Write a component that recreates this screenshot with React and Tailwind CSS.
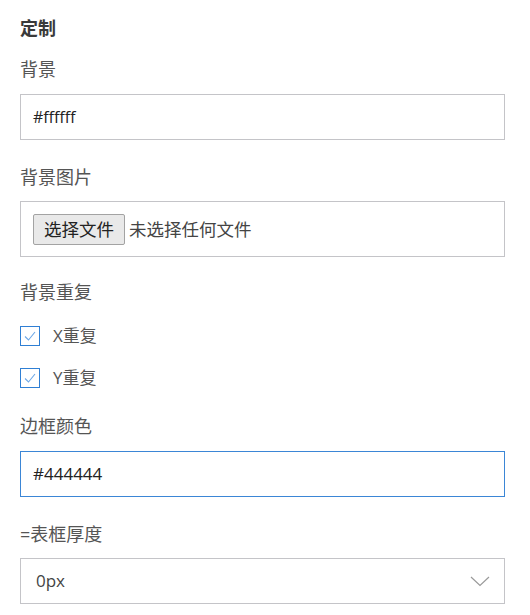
import React from 'react';

const font = { fontFamily: '"Open Sans", "Noto Sans CJK SC", sans-serif' };

function Label({ children, className = '' }) {
  return (
    <div className={`text-[18px] leading-[24px] text-[#555] ${className}`}>{children}</div>
  );
}

function CheckRow({ label, className = '' }) {
  return (
    <div className={`flex items-center h-6 ${className}`}>
      <span className="w-5 h-5 border-[1.5px] border-[#2f7fd4] flex items-center justify-center bg-white">
        <svg width="14" height="12" viewBox="0 0 14 12" fill="none">
          <path d="M2 6.5 L5.5 10 L12 2" stroke="#6fa8e6" strokeWidth="1.1" />
        </svg>
      </span>
      <span className="ml-[13px] text-[17px] text-[#555]">{label}</span>
    </div>
  );
}

export default function App() {
  return (
    <div className="bg-white w-[530px] h-[615px] pl-5 pr-[25px] pt-4" style={font}>
      <div className="text-[18px] leading-[24px] font-bold text-[#3a3a3a]">定制</div>

      <Label className="mt-[17px]">背景</Label>
      <div className="mt-[13px] h-[46px] border border-[#c4c4c8] flex items-center pl-3 text-[16px] text-[#222]">
        #ffffff
      </div>

      <Label className="mt-[25px]">背景图片</Label>
      <div className="mt-3 h-[56px] border border-[#c4c4c8] flex items-center pl-3 text-[17.5px] text-[#444]">
        <span className="h-[31px] px-[10px] flex items-center border border-[#a3a3a3] rounded-[2px] bg-[#e9e9e9] text-[#222]">
          选择文件
        </span>
        <span className="ml-[4px]">未选择任何文件</span>
      </div>

      <Label className="mt-[23px]">背景重复</Label>
      <CheckRow label="X重复" className="mt-[20px]" />
      <CheckRow label="Y重复" className="mt-[18px]" />

      <Label className="mt-[24px]">边框颜色</Label>
      <div className="mt-[13px] h-[46px] border border-[#3b86d6] flex items-center pl-3 text-[17px] text-[#222]">
        #444444
      </div>

      <Label className="mt-[25px]">=表框厚度</Label>
      <div className="mt-3 h-[46px] border border-[#c4c4c8] flex items-center justify-between pl-[15px] pr-[14px] text-[17px] text-[#444]">
        <span>0px</span>
        <svg width="20" height="11" viewBox="0 0 20 11" fill="none">
          <path d="M1 1 L10 9.5 L19 1" stroke="#9a9a9a" strokeWidth="1.2" />
        </svg>
      </div>
    </div>
  );
}
